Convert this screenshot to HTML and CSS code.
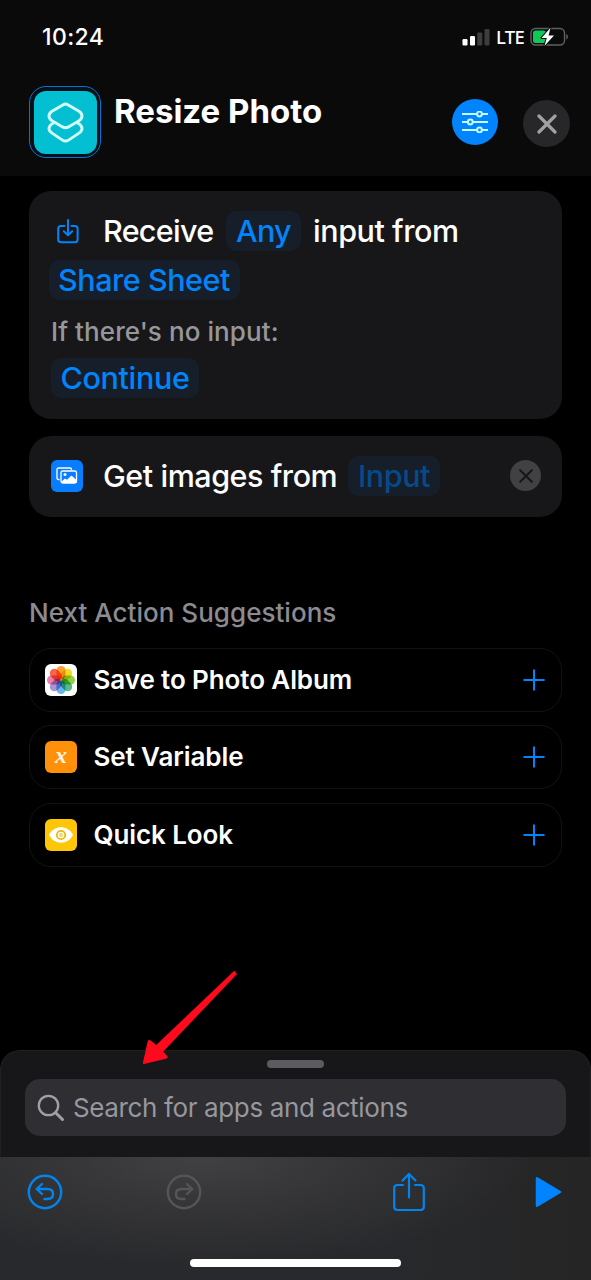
FILE: index.html
```html
<!DOCTYPE html>
<html lang="en">
<head>
<meta charset="utf-8">
<title>Resize Photo</title>
<link rel="stylesheet" href="styles.css">
</head>
<body>
<div class="screen">
  <header class="header">
    <div class="status">
      <span class="time">10:24</span>
      <div class="indicators">
        <svg width="28" height="18" viewBox="0 0 28 18"><rect x="0.5" y="11" width="5" height="6.5" rx="1.2" fill="#fff"/><rect x="8" y="8" width="5" height="9.500" rx="1.2" fill="#fff"/><rect x="15.300" y="4.500" width="5" height="13" rx="1.2" fill="#3d3d3e"/><rect x="22.500" y="1" width="5" height="16.500" rx="1.2" fill="#3d3d3e"/></svg>
        <span class="network">LTE</span>
        <svg width="39" height="20" viewBox="0 0 39 20"><rect x="1" y="1.500" width="33.500" height="16.500" rx="4.500" fill="none" stroke="#606062" stroke-width="1.400"/><path d="M36.200 7v5.500c2.200-.7 2.200-4.800 0-5.500z" fill="#606062"/><rect x="3" y="3.500" width="13" height="12.500" rx="2.500" fill="#0fc957"/><path d="M20.500.8 11.500 11h5.300l-2.400 8L24 8.500h-5.400z" fill="#fff" stroke="#0a0a0a" stroke-width="2" paint-order="stroke" stroke-linejoin="round"/></svg>
      </div>
    </div>
    <div class="titlebar">
      <div class="app-icon"><svg viewBox="0 0 63 63" fill="none" stroke="#d4ffff" stroke-width="2.900" stroke-linejoin="round"><path d="M29.200 13.700Q31.500 12.400 33.800 13.700L45 20.200Q48 22.200 48 25T45 29.700L34.500 35.900Q31.500 37.500 28.500 35.900L18 29.700Q15 27.800 15 25T18 20.200Z"/><path d="M19.500 31.800 18 32.900Q15 34.900 15 37.600T18 42.100L28.500 49.100Q31.500 51 34.500 49.100L45 42.100Q48 40.100 48 37.600T45 32.900L43.500 31.800"/></svg></div>
      <h1 class="title">Resize Photo</h1>
      <div class="round settings"><svg width="28" height="22" viewBox="0 0 28 22" fill="#0284ff" stroke="#c4fbff" stroke-width="2"><path d="M1 3h26M1 11h26M1 19h26"/><circle cx="18.500" cy="3" r="2.400"/><circle cx="9.300" cy="11" r="2.400"/><circle cx="18.500" cy="19" r="2.400"/></svg></div>
      <div class="round close"><svg width="20" height="20" viewBox="0 0 20 20" stroke="#a0a0a5" stroke-width="3.200" stroke-linecap="round"><path d="M2 2l16 16M18 2 2 18"/></svg></div>
    </div>
  </header>

  <main class="actions">
    <section class="card receive">
      <div class="line">
        <svg class="receive-icon" width="22" height="25" viewBox="0 0 22 25" fill="none" stroke="#0284fb" stroke-width="2" stroke-linecap="round" stroke-linejoin="round"><path d="M7.500 7H4Q1.200 7 1.200 9.500V20.500Q1.200 23.200 4 23.200H18Q20.600 23.200 20.600 20.500V9.500Q20.600 7 18 7H14.500M11 1V16M6.800 12.200 11 16.300 15.200 12.200"/></svg>
        <span class="text word-receive">Receive</span>
        <span class="chip chip-any">Any</span>
        <span class="text word-input">input from</span>
      </div>
      <div class="line"><span class="chip chip-share">Share Sheet</span></div>
      <p class="note">If there's no input:</p>
      <div class="line"><span class="chip chip-continue">Continue</span></div>
    </section>

    <section class="card images">
      <div class="tile blue"><svg width="22" height="18" viewBox="0 0 22 18" fill="none" stroke="#fff" stroke-width="1.300" stroke-linejoin="round"><path d="M3.500 12.500H2.500Q1 12.500 1 11V2.500Q1 1 2.500 1H14Q15.500 1 15.500 2.500V3"/><rect x="5" y="4" width="15.500" height="12" rx="1.800"/><circle cx="9" cy="7.500" r="1.500" fill="#fff" stroke="none"/><path d="M5.500 14.500 9 11.500l2 1.300L15.500 8.500 20.500 13V16H5.500z" fill="#fff" stroke="none"/></svg></div>
      <span class="text word-images">Get images from</span>
      <span class="chip chip-input">Input</span>
      <div class="remove"><svg width="14" height="14" viewBox="0 0 14 14" stroke="#171719" stroke-width="2.100" stroke-linecap="round"><path d="M1.200 1.200l11.600 11.600M12.800 1.200 1.200 12.800"/></svg></div>
    </section>

    <h2 class="subhead">Next Action Suggestions</h2>
    <div class="suggestions">
      <div class="row">
        <svg class="photos" width="32" height="32" viewBox="0 0 32 32"><rect width="32" height="32" rx="6" fill="#fff"/><rect class="petal" x="11.500" y="2" width="9" height="13.500" rx="4.500" fill="#fba030"/><rect class="petal" x="11.500" y="2" width="9" height="13.500" rx="4.500" fill="#f3dc20" transform="rotate(45 16 16)"/><rect class="petal" x="11.500" y="2" width="9" height="13.500" rx="4.500" fill="#8fce45" transform="rotate(90 16 16)"/><rect class="petal" x="11.500" y="2" width="9" height="13.500" rx="4.500" fill="#55bd8a" transform="rotate(135 16 16)"/><rect class="petal" x="11.500" y="2" width="9" height="13.500" rx="4.500" fill="#68b5ee" transform="rotate(180 16 16)"/><rect class="petal" x="11.500" y="2" width="9" height="13.500" rx="4.500" fill="#a795d6" transform="rotate(225 16 16)"/><rect class="petal" x="11.500" y="2" width="9" height="13.500" rx="4.500" fill="#ea80ae" transform="rotate(270 16 16)"/><rect class="petal" x="11.500" y="2" width="9" height="13.500" rx="4.500" fill="#f8644c" transform="rotate(315 16 16)"/></svg>
        <span class="label l-save">Save to Photo Album</span>
        <svg class="plus" width="22" height="22" viewBox="0 0 22 22"><path d="M11 .5v21M.5 11h21" stroke="#0284fb" stroke-width="2"/></svg>
      </div>
      <div class="row">
        <div class="tile orange">x</div>
        <span class="label l-set">Set Variable</span>
        <svg class="plus" width="22" height="22" viewBox="0 0 22 22"><path d="M11 .5v21M.5 11h21" stroke="#0284fb" stroke-width="2"/></svg>
      </div>
      <div class="row">
        <div class="tile yellow"><svg width="24" height="16" viewBox="0 0 24 16"><path d="M0 8C5-2.200 19-2.200 24 8 19 18.200 5 18.200 0 8z" fill="#fff"/><circle cx="12" cy="8" r="4.200" fill="#fff" stroke="#efb90c" stroke-width="1.800"/><circle cx="12" cy="8" r="2.200" fill="#f5d878"/></svg></div>
        <span class="label l-quick">Quick Look</span>
        <svg class="plus" width="22" height="22" viewBox="0 0 22 22"><path d="M11 .5v21M.5 11h21" stroke="#0284fb" stroke-width="2"/></svg>
      </div>
    </div>
  </main>

  <div class="sheet">
    <div class="grabber"></div>
    <div class="search">
      <svg width="28" height="28" viewBox="0 0 28 28" fill="none" stroke="#a0a0a6" stroke-linecap="round"><circle cx="11.500" cy="11.500" r="9.700" stroke-width="2.300"/><path d="M18.700 18.700 25.500 25.500" stroke-width="3"/></svg>
      <span class="placeholder">Search for apps and actions</span>
    </div>
  </div>

  <footer class="toolbar">
    <div class="tools">
      <svg class="undo" width="36" height="36" viewBox="0 0 36 36" fill="none" stroke="#0284ee" stroke-width="2.400" stroke-linecap="round" stroke-linejoin="round"><circle cx="18" cy="18" r="16.200"/><path d="M15 10 9.700 15 15 20M9.700 15H20.500Q26 15 26 20T20.500 25H17.500"/></svg>
      <svg class="redo" width="36" height="36" viewBox="0 0 36 36" fill="none" stroke="#555557" stroke-width="2.400" stroke-linecap="round" stroke-linejoin="round"><circle cx="18" cy="18" r="16.200"/><path d="M21 10 26.300 15 21 20M26.300 15H15.500Q10 15 10 20T15.500 25H18.500"/></svg>
      <svg class="share" width="32" height="40" viewBox="0 0 32 40" fill="none" stroke="#0284ee" stroke-width="2.200" stroke-linecap="round" stroke-linejoin="round"><path d="M10 13H4.500Q1.200 13 1.200 16.200V34.800Q1.200 38 4.500 38H27.500Q30.800 38 30.800 34.800V16.200Q30.800 13 27.500 13H22M16 2V25.500M9.500 8.500 16 2 22.500 8.500"/></svg>
      <svg class="play" width="27" height="32" viewBox="0 0 27 32"><path d="M2 2.200V29.800L25 16z" fill="#0284ff" stroke="#0284ff" stroke-width="2.500" stroke-linejoin="round"/></svg>
    </div>
    <div class="home"></div>
  </footer>

  <svg class="pointer" width="96" height="96" viewBox="0 0 96 96"><path d="M93.300.8 96 3.900 22.200 81.600 26.800 86.800Q26.800 88.300 25 88.700L3 94Q1.500 94 2 92.300L6.800 71Q8 69.200 9.700 70.600L15.200 75Z" fill="#ff0a1c"/></svg>
</div>
</body>
</html>
```
FILE: styles.css
```css
* { box-sizing: border-box; }
body { margin: 0; background: #000; font-family: Inter, "Liberation Sans", sans-serif; color: #fff; }
svg { display: block; flex: none; }
h1, h2, p { margin: 0; }
.screen { position: relative; width: 591px; height: 1280px; display: flex; flex-direction: column; overflow: hidden; background: #000; white-space: nowrap; }

.header { height: 176px; background: #0a0a0a; flex: none; }
.status { height: 86px; padding: 22px 22px 0 42px; display: flex; justify-content: space-between; align-items: flex-start; }
.time { font-size: 23px; line-height: 30px; font-weight: 500; letter-spacing: .4px; }
.indicators { display: flex; align-items: center; height: 29px; }
.network { font-family: "Noto Sans", sans-serif; font-size: 18.500px; line-height: 29px; font-weight: 500; letter-spacing: -.7px; margin: 0 6px 0 6px; }
.titlebar { display: flex; padding: 0 21px 0 29px; }
.app-icon { width: 72px; height: 72px; display: flex; align-items: center; justify-content: center; border: 1.500px solid #0873d4; border-radius: 17px; background: #021019; }
.app-icon svg { width: 63px; height: 63px; border-radius: 12px; background: #04bfd2; }
.title { margin-left: 13px; font-size: 33px; line-height: 51px; font-weight: 700; flex: 1; }
.round { display: flex; align-items: center; justify-content: center; border-radius: 50%; flex: none; }
.settings { width: 46px; height: 46px; margin-top: 13px; background: #0284ff; }
.close { width: 47px; height: 47px; margin: 14px 0 0 25px; background: #272729; }

.actions { flex: 1; padding: 15px 29px 0; }
.card { background: #171719; border-radius: 22px; }
.text, .chip { font-size: 30.500px; line-height: 40px; font-weight: 500; letter-spacing: -.45px; }
.chip { display: block; color: #0284fb; background: #151e29; border-radius: 10px; height: 40px; text-align: center; flex: none; }
.line { display: flex; align-items: center; }
.receive { height: 228px; padding: 20px 20px 0; }
.receive-icon { margin: 0 24px 0 8px; }
.chip-any { width: 75px; margin: 0 12px 0 11px; letter-spacing: -.7px; }
.word-receive { width: 112px; letter-spacing: -.7px; }
.chip-share { width: 191px; margin-top: 9px; padding-right: 1px; }
.note { font-size: 26px; line-height: 32px; font-weight: 500; letter-spacing: .08px; color: #97979b; margin: 16px 0 10px 2px; }
.chip-continue { width: 148px; margin-left: 2px; letter-spacing: -.35px; }
.images { height: 81px; margin-top: 17px; padding: 0 21px 2px 22px; display: flex; align-items: center; }
.tile { width: 32px; height: 32px; border-radius: 6px; display: flex; align-items: center; justify-content: center; flex: none; }
.blue { background: #087dff; }
.word-images { margin-left: 20px; width: 245px; }
.chip-input { width: 92px; color: #064a89; }
.remove { width: 31px; height: 31px; border-radius: 50%; background: #414144; margin-left: auto; display: flex; align-items: center; justify-content: center; }

.subhead { margin-top: 80px; font-size: 26px; line-height: 32px; font-weight: 500; letter-spacing: .03px; color: #8b8b90; }
.suggestions { display: flex; flex-direction: column; gap: 13.400px; margin-top: 19px; }
.row { height: 64px; border: 1px solid #131314; border-radius: 22px; display: flex; align-items: center; padding: 0 16px 0 15px; }
.label { margin-left: 16.500px; font-size: 26px; line-height: 32px; font-weight: 600; letter-spacing: -.1px; }
.photos { isolation: isolate; }
.petal { mix-blend-mode: multiply; }
.plus { margin-left: auto; }
.orange { background: #ff9009; font: italic 700 24px/24px "Liberation Serif", serif; padding-bottom: 4px; color: #fff4e0; }
.yellow { background: #fdc606; }

.sheet { height: 107px; flex: none; background: #171719; border: 1px solid #202022; border-bottom: 0; border-radius: 20px 20px 0 0; padding: 9px 24px 0; }
.grabber { width: 57px; height: 8px; border-radius: 4px; background: #5c5c60; margin: 0 auto 10.500px; }
.search { height: 57px; border-radius: 15px; background: #2e2e33; display: flex; align-items: center; padding: 1px 0 0 12px; }
.placeholder { margin-left: 8px; font-size: 26px; line-height: 32px; letter-spacing: -.37px; color: #97979e; }

.toolbar { height: 123px; flex: none; padding-top: 15px; background: radial-gradient(ellipse 330px 110px at 200px 0, #414143 0, #38383acc 45%, transparent 100%), linear-gradient(90deg, #28292c, #28292c 65%, #252525); }
.tools { display: flex; align-items: flex-start; height: 87px; padding: 0 29px 0 26.500px; }
.undo, .redo { margin-top: 2px; }
.redo { margin-left: 103.500px; }
.share { margin-left: 191px; }
.play { margin-left: auto; margin-top: 4px; }
.home { width: 211px; height: 8px; border-radius: 4px; background: #fff; margin: 0 auto; }
.pointer { position: absolute; left: 141px; top: 970px; }
```
